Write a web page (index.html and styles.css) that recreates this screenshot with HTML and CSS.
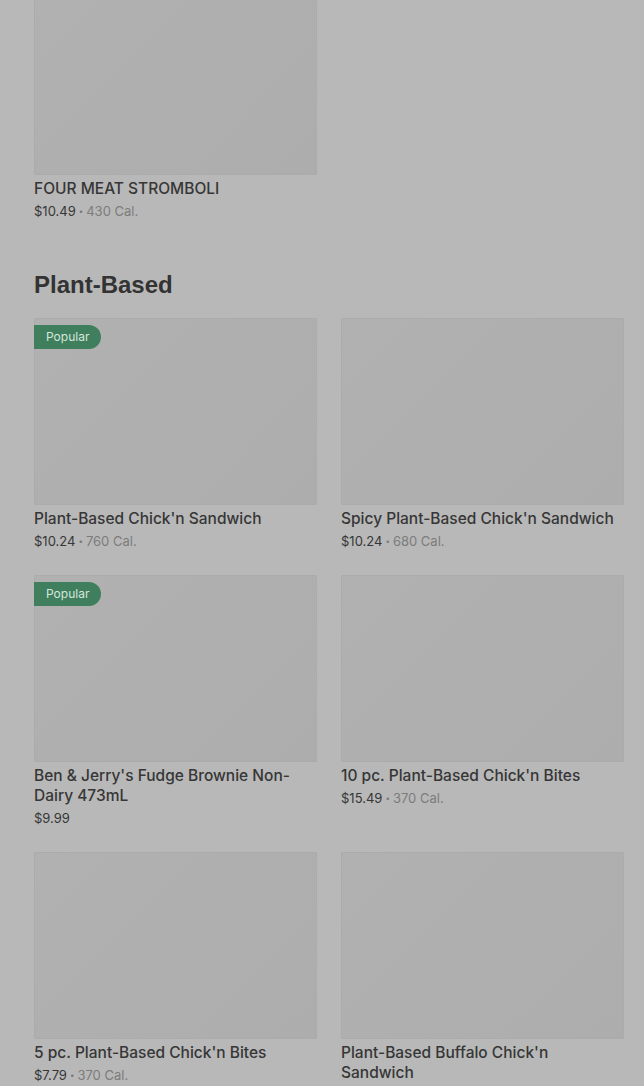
FILE: index.html
```html
<!DOCTYPE html>
<html>
<head>
<meta charset="utf-8">
<link rel="stylesheet" href="styles.css">
</head>
<body>
<main class="page">
  <section class="section section-top">
    <div class="grid">
      <div class="card">
        <div class="thumb"></div>
        <div class="name">FOUR MEAT STROMBOLI</div>
        <div class="meta"><span class="price">$10.49</span><span class="dot">•</span><span class="cal">430 Cal.</span></div>
      </div>
    </div>
  </section>

  <section class="section">
    <h2 class="heading">Plant-Based</h2>
    <div class="grid">
      <div class="card">
        <div class="thumb"><span class="badge">Popular</span></div>
        <div class="name">Plant-Based Chick'n Sandwich</div>
        <div class="meta"><span class="price">$10.24</span><span class="dot">•</span><span class="cal">760 Cal.</span></div>
      </div>
      <div class="card">
        <div class="thumb"></div>
        <div class="name">Spicy Plant-Based Chick'n Sandwich</div>
        <div class="meta"><span class="price">$10.24</span><span class="dot">•</span><span class="cal">680 Cal.</span></div>
      </div>
      <div class="card">
        <div class="thumb"><span class="badge">Popular</span></div>
        <div class="name">Ben &amp; Jerry's Fudge Brownie Non-Dairy 473mL</div>
        <div class="meta"><span class="price">$9.99</span></div>
      </div>
      <div class="card">
        <div class="thumb"></div>
        <div class="name">10 pc. Plant-Based Chick'n Bites</div>
        <div class="meta"><span class="price">$15.49</span><span class="dot">•</span><span class="cal">370 Cal.</span></div>
      </div>
      <div class="card">
        <div class="thumb"></div>
        <div class="name">5 pc. Plant-Based Chick'n Bites</div>
        <div class="meta"><span class="price">$7.79</span><span class="dot">•</span><span class="cal">370 Cal.</span></div>
      </div>
      <div class="card">
        <div class="thumb"></div>
        <div class="name">Plant-Based Buffalo Chick'n Sandwich</div>
      </div>
    </div>
  </section>
</main>
</body>
</html>
```

FILE: styles.css
```css
html, body {
  margin: 0;
  padding: 0;
  background: #b8b8b8;
  overflow: hidden;
}
body {
  font-family: Inter, Roboto, "Liberation Sans", sans-serif;
  color: #363636;
}
.page {
  padding: 0 20px 0 34px;
}
.grid {
  display: grid;
  grid-template-columns: 283px 283px;
  column-gap: 24px;
  row-gap: 24px;
}
.section-top .card {
  margin-top: -12px;
}
.thumb {
  position: relative;
  height: 187px;
  background: linear-gradient(135deg, #b1b1b1 0%, #adadad 100%);
  border-radius: 2px;
  box-shadow: inset 0 0 0 1px #ababab;
}
.badge {
  position: absolute;
  left: 0;
  top: 7px;
  height: 24px;
  line-height: 24px;
  padding: 0 12px;
  background: #3f7f5e;
  color: #d6e6dc;
  font-size: 12px;
  border-radius: 0 12px 12px 0;
}
.name {
  margin-top: 4px;
  font-size: 15.5px;
  line-height: 20px;
  font-weight: 500;
  color: #363636;
}
.meta {
  margin-top: 2px;
  font-size: 13px;
  line-height: 20px;
  color: #363636;
}
.dot {
  color: #7a7a7a;
  font-size: 8px;
  margin: 0 3px;
  vertical-align: 2px;
}
.cal {
  color: #7c7c7c;
}
.heading {
  margin: 48px 0 17px;
  font-family: "Liberation Sans", Arial, sans-serif;
  font-weight: 700;
  font-size: 24px;
  line-height: 32px;
  color: #333333;
}
```
